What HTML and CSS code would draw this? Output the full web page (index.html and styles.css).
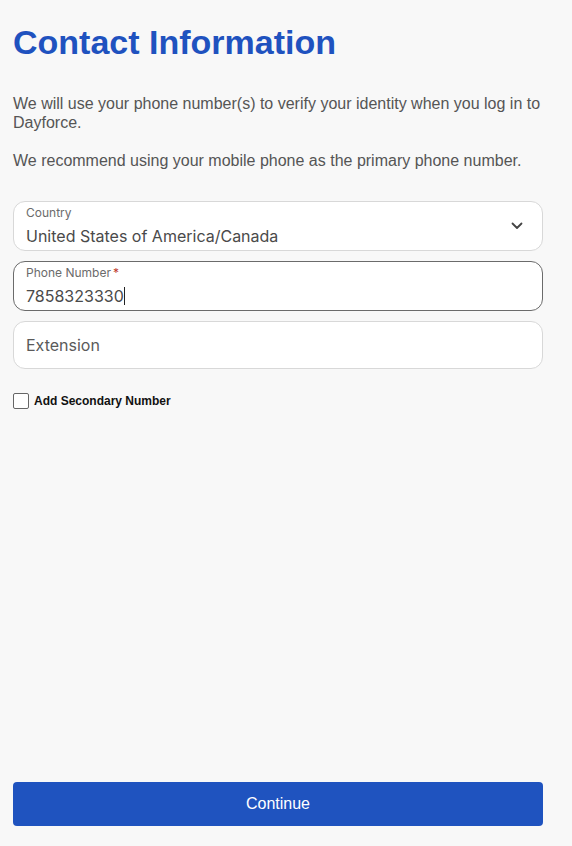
FILE: index.html
```html
<!DOCTYPE html>
<html lang="en">
<head>
<meta charset="utf-8">
<title>Contact Information</title>
<link rel="stylesheet" href="styles.css">
</head>
<body>
<main class="page">
  <h1 class="title">Contact Information</h1>
  <p class="intro">We will use your phone number(s) to verify your identity when you log in to Dayforce.</p>
  <p class="intro">We recommend using your mobile phone as the primary phone number.</p>

  <div class="fields">
    <div class="field">
      <span class="label">Country</span>
      <span class="value">United States of America/Canada</span>
      <svg class="chevron" width="12" height="8" viewBox="0 0 12 8"><path d="M1.5 1.5 L6 6 L10.5 1.5" fill="none" stroke="#444" stroke-width="1.8" stroke-linecap="round" stroke-linejoin="round"/></svg>
    </div>
    <div class="field focused">
      <span class="label">Phone Number<span class="req">*</span></span>
      <span class="value">7858323330<span class="caret"></span></span>
    </div>
    <div class="field empty">
      <span class="placeholder">Extension</span>
    </div>
  </div>

  <label class="check">
    <span class="box"></span>
    <span class="check-label">Add Secondary Number</span>
  </label>

  <button class="continue" type="button">Continue</button>
</main>
</body>
</html>
```

FILE: styles.css
```css
html, body {
  margin: 0;
  padding: 0;
  background: #f8f8f8;
}
body {
  font-family: "Liberation Sans", Arial, sans-serif;
}
.page {
  box-sizing: border-box;
  min-height: 846px;
  display: flex;
  flex-direction: column;
  padding: 0 29px 20px 13px;
}
.title {
  margin: 22px 0 0 0;
  font-size: 34px;
  line-height: 40px;
  font-weight: bold;
  color: #1f52bf;
}
.intro {
  margin: 32px 0 0 0;
  font-size: 16px;
  line-height: 19px;
  color: #555;
}
.intro + .intro {
  margin-top: 19px;
}
.fields {
  margin-top: 31px;
  display: flex;
  flex-direction: column;
  gap: 10px;
}
.field {
  position: relative;
  box-sizing: border-box;
  height: 50px;
  background: #fff;
  border: 1px solid #d8d8d8;
  border-radius: 12px;
  padding: 3px 12px 0 12px;
  display: flex;
  flex-direction: column;
  font-family: Inter, "Noto Sans", sans-serif;
}
.field.focused {
  border-color: #6b6b6b;
}
.field.empty {
  height: 48px;
  padding-top: 0;
  justify-content: center;
}
.label {
  font-size: 12px;
  line-height: 16px;
  color: #6b6b6b;
}
.req {
  color: #c0392b;
  margin-left: 2px;
}
.value {
  font-size: 16px;
  line-height: 22px;
  color: #4a4a4a;
  margin-top: 4px;
}
.caret {
  display: inline-block;
  width: 1px;
  height: 18px;
  background: #222;
  vertical-align: -3px;
}
.placeholder {
  font-size: 16px;
  line-height: 20px;
  color: #5a5a5a;
}
.chevron {
  position: absolute;
  right: 19px;
  top: 20px;
}
.check {
  margin-top: 24px;
  display: flex;
  align-items: center;
  gap: 5px;
}
.box {
  box-sizing: border-box;
  width: 16px;
  height: 16px;
  border: 1px solid #666;
  border-radius: 2px;
  background: #fff;
}
.check-label {
  font-size: 12px;
  font-weight: bold;
  color: #111;
}
.continue {
  margin-top: auto;
  height: 44px;
  border: none;
  border-radius: 4px;
  background: #1f53bf;
  color: #fff;
  font-family: "Liberation Sans", Arial, sans-serif;
  font-size: 16px;
}
```
